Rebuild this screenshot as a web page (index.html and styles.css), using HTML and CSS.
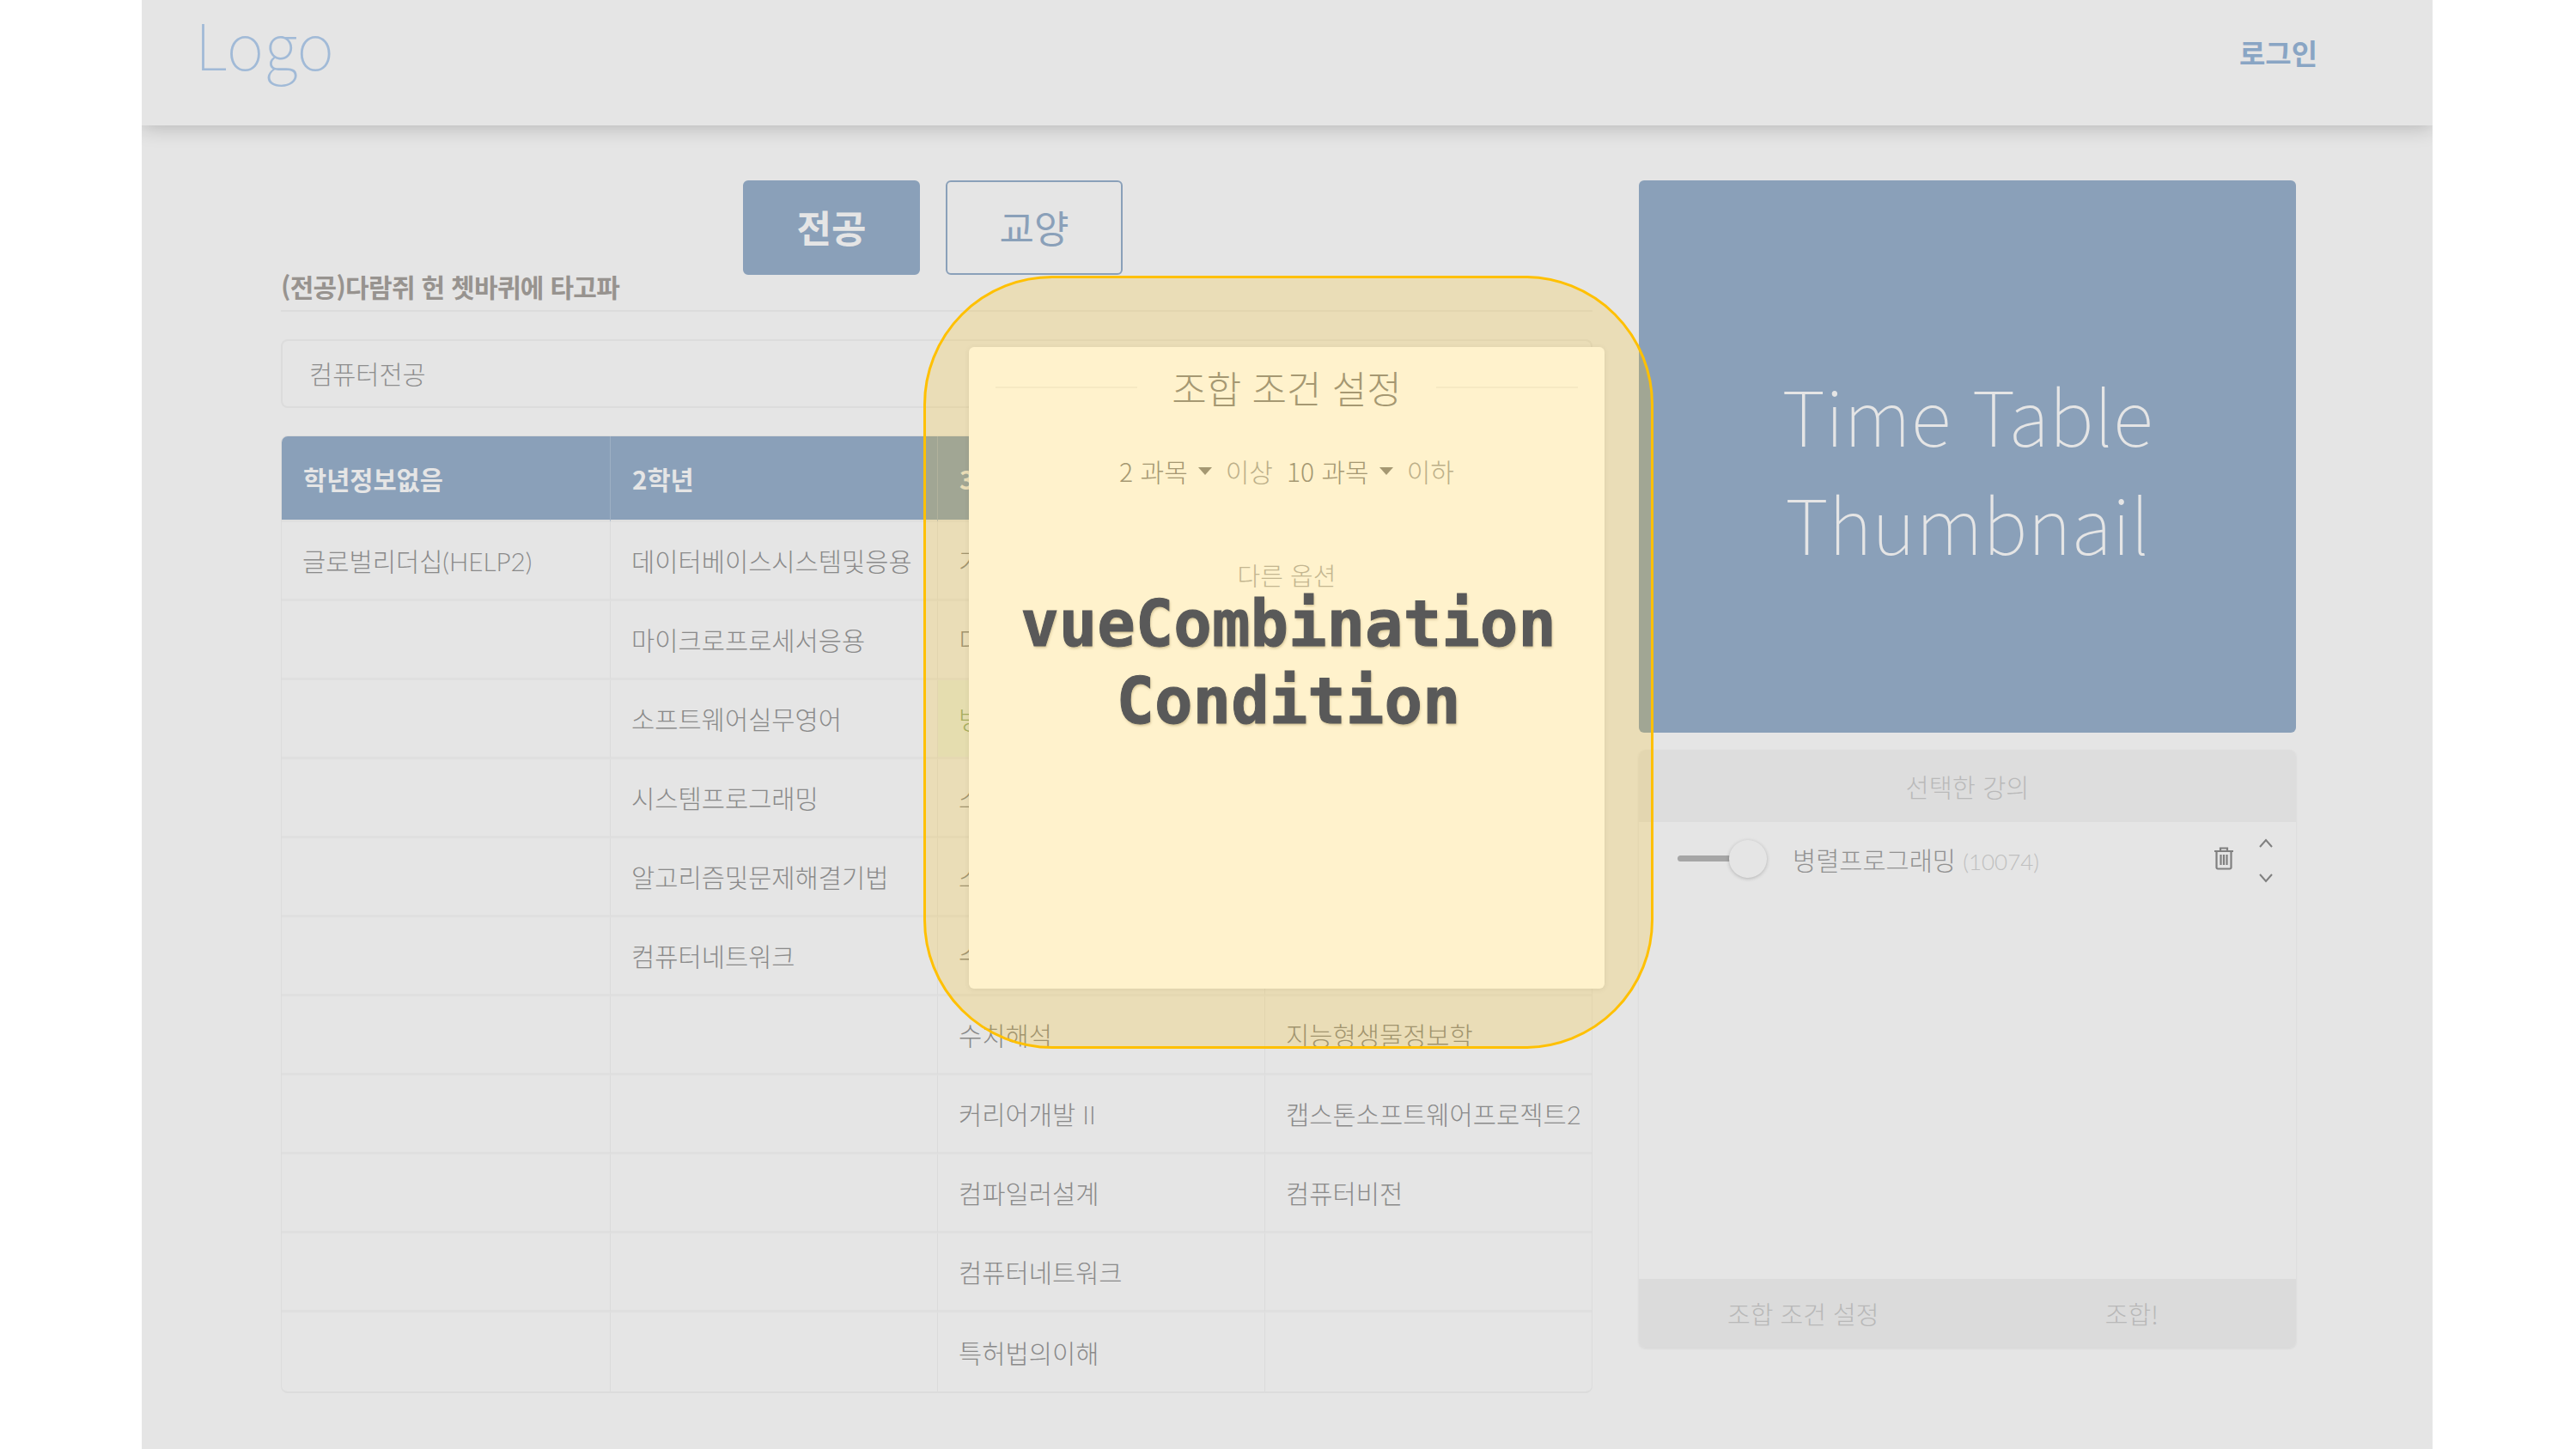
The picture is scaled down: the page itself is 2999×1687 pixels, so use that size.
FILE: index.html
```html
<!DOCTYPE html>
<html lang="ko">

<head>
  <meta charset="UTF-8">
  <title>Time Table</title>
  <link rel="stylesheet" href="styles.css">
</head>

<body>
  <div class="frame">
    <header class="topbar">
      <a class="logo">Logo</a>
      <a class="login">로그인</a>
    </header>

    <main class="content">
      <section class="left">
        <div class="tabs">
          <button class="tab tab-on">전공</button>
          <button class="tab">교양</button>
        </div>
        <h2 class="title">(전공)다람쥐 헌 쳇바퀴에 타고파</h2>
        <div class="search">컴퓨터전공</div>
        <table class="courses">
          <thead>
            <tr><th>학년정보없음</th><th>2학년</th><th>3학년</th><th>4학년</th></tr>
          </thead>
          <tbody>
            <tr><td>글로벌리더십(HELP2)</td><td>데이터베이스시스템및응용</td><td>기계학습</td><td>정보보호개론</td></tr>
            <tr><td></td><td>마이크로프로세서응용</td><td>디지털신호처리</td><td>인공지능</td></tr>
            <tr><td></td><td>소프트웨어실무영어</td><td class="picked">병렬프로그래밍</td><td>자연어처리</td></tr>
            <tr><td></td><td>시스템프로그래밍</td><td>소프트웨어공학</td><td>데이터마이닝</td></tr>
            <tr><td></td><td>알고리즘및문제해결기법</td><td>소프트웨어보안</td><td>컴퓨터그래픽스</td></tr>
            <tr><td></td><td>컴퓨터네트워크</td><td>수리통계학</td><td>임베디드시스템</td></tr>
            <tr><td></td><td></td><td>수치해석</td><td>지능형생물정보학</td></tr>
            <tr><td></td><td></td><td>커리어개발 II</td><td>캡스톤소프트웨어프로젝트2</td></tr>
            <tr><td></td><td></td><td>컴파일러설계</td><td>컴퓨터비전</td></tr>
            <tr><td></td><td></td><td>컴퓨터네트워크</td><td></td></tr>
            <tr><td></td><td></td><td>특허법의이해</td><td></td></tr>
          </tbody>
        </table>
      </section>

      <aside class="right">
        <div class="thumb">Time Table<br>Thumbnail</div>
        <div class="picks">
          <div class="picks-head">선택한 강의</div>
          <div class="picks-body">
            <div class="pick">
              <span class="slider"><span class="slider-track"></span><span class="slider-knob"></span></span>
              <span class="pick-name">병렬프로그래밍 <span class="pick-code">(10074)</span></span>
              <svg class="trash" viewBox="0 0 24 28" fill="none" stroke="#8f8f8f" stroke-width="2.2">
                <path d="M1 6h22M8 6V2.500h8V6M3.500 6v19a1.500 1.500 0 0 0 1.500 1.500h14a1.500 1.500 0 0 0 1.500-1.500V6M8.500 10v12M12 10v12M15.500 10v12"/>
              </svg>
              <span class="arrows">
                <svg viewBox="0 0 18 12" fill="none" stroke="#8f8f8f" stroke-width="2"><path d="M2 10l7-8 7 8"/></svg>
                <svg viewBox="0 0 18 12" fill="none" stroke="#8f8f8f" stroke-width="2"><path d="M2 2l7 8 7-8"/></svg>
              </span>
            </div>
          </div>
          <div class="picks-foot">
            <button class="foot-btn">조합 조건 설정</button>
            <button class="foot-btn">조합!</button>
          </div>
        </div>
      </aside>
    </main>

    <div class="dim"></div>

    <div class="modal">
      <div class="modal-title">조합 조건 설정</div>
      <div class="modal-range">
        <span class="range-val">2 과목<i class="caret"></i></span>
        <span class="range-word">이상</span>
        <span class="range-val">10 과목<i class="caret"></i></span>
        <span class="range-word">이하</span>
      </div>
      <div class="modal-other">다른 옵션</div>
    </div>

    <div class="callout">vueCombination<br>Condition</div>
  </div>
</body>

</html>
```

FILE: styles.css
```css
* {
  box-sizing: border-box;
}

html,
body {
  margin: 0;
  height: 100%;
  overflow: hidden;
  background: #fff;
}

body {
  font-family: "Noto Sans CJK KR", "Noto Sans", sans-serif;
  font-weight: 300;
  font-size: 29.5px;
  color: #9a9a9a;
}

.frame {
  position: relative;
  width: 2667px;
  height: 1687px;
  margin-left: 165px;
  background: #fff;
  overflow: hidden;
}

.topbar {
  height: 146px;
  display: flex;
  justify-content: space-between;
  padding: 0 134px 0 62px;
  box-shadow: 0 3px 22px rgba(0, 0, 0, .2);
}

.logo {
  font-weight: 100;
  font-size: 74px;
  line-height: 100px;
  color: #b4d0f0;
}

.login {
  margin-top: 36px;
  font-size: 33px;
  line-height: 50px;
  font-weight: 700;
  color: #99b8db;
}

.content {
  display: flex;
  gap: 54px;
  padding: 64px 0 0 162px;
}

.left {
  width: 1527px;
}

.tabs {
  display: flex;
  gap: 30px;
  margin-left: 538px;
  height: 110px;
}

.tab {
  width: 206px;
  padding-bottom: 4px;
  border: 2px solid #9ab3cf;
  border-radius: 6px;
  background: #fff;
  font-family: inherit;
  font-size: 44px;
  font-weight: 400;
  color: #9ab3cf;
}

.tab-on {
  background: #9ab3cf;
  color: #fff;
  font-weight: 700;
}

.title {
  height: 55px;
  margin: -12px 0 0;
  font-size: 30px;
  font-weight: 700;
  line-height: 50px;
  letter-spacing: -.7px;
  color: #a9a4a0;
  border-bottom: 2px solid #f5f5f5;
}

.search {
  margin-top: 32px;
  height: 80px;
  padding-left: 31px;
  line-height: 75px;
  border: 2px solid #f5f5f5;
  border-radius: 8px;
  color: #9f9f9f;
}

.courses {
  width: 100%;
  margin-top: 32px;
  table-layout: fixed;
  border-collapse: separate;
  border-spacing: 0;
  border: 1px solid #f5f5f5;
  border-bottom-width: 2px;
  border-radius: 8px;
  overflow: hidden;
}

.courses th,
.courses td {
  height: 92px;
  padding: 0 0 0 24px;
  text-align: left;
  border-left: 1px solid #f4f4f4;
  border-bottom: 3px solid #f9f9f9;
  white-space: nowrap;
}

.courses td {
  font-family: Lato, "Noto Sans CJK KR", sans-serif;
  font-size: 29.6px;
}

.courses th:first-child,
.courses td:first-child {
  width: 382px;
  border-left: 0;
}

.courses th {
  height: 100px;
  padding-left: 25px;
  background: #9ab3cf;
  color: #fff;
  font-weight: 700;
  border-left-color: #b0c4db;
}

.courses tr:last-child td {
  border-bottom: 0;
}

.courses .picked {
  background: #f9fff4;
  color: #a2bd85;
}

.right {
  width: 765px;
}

.thumb {
  height: 643px;
  display: flex;
  align-items: center;
  justify-content: center;
  padding-top: 26px;
  text-align: center;
  border-radius: 6px;
  background: #9ab3cf;
  color: #fff;
  font-weight: 100;
  font-size: 88px;
  line-height: 126px;
}

.picks {
  display: flex;
  flex-direction: column;
  height: 696px;
  margin-top: 20px;
  border-radius: 8px;
  box-shadow: 0 1px 3px rgba(0, 0, 0, .08);
  overflow: hidden;
}

.picks-head {
  height: 84px;
  text-align: center;
  line-height: 84px;
  background: #f7f7f7;
  color: #cfcfcf;
}

.picks-body {
  flex: 1;
  padding: 20px 26px 0 45px;
}

.pick {
  display: flex;
  align-items: center;
  height: 46px;
}

.slider {
  position: relative;
  width: 104px;
  height: 46px;
  flex: none;
}

.slider-track {
  position: absolute;
  left: 0;
  top: 19px;
  width: 70px;
  height: 7px;
  border-radius: 4px;
  background: #b9b9b9;
}

.slider-knob {
  position: absolute;
  left: 60px;
  top: 1px;
  width: 44px;
  height: 44px;
  border-radius: 50%;
  background: #fff;
  box-shadow: 0 1px 4px rgba(0, 0, 0, .22);
}

.pick-name {
  flex: 1;
  margin-left: 30px;
  font-size: 29.5px;
  color: #a3a3a3;
}

.pick-code {
  font-family: Lato, sans-serif;
  font-size: 26px;
  color: #d5d5d5;
}

.trash {
  width: 24px;
  height: 28px;
  margin: -2px 28px 0 0;
}

.arrows {
  display: flex;
  flex-direction: column;
  gap: 28px;
  width: 18px;
  margin-top: 4px;
}

.arrows svg {
  display: block;
  width: 18px;
  height: 12px;
}

.picks-foot {
  display: flex;
  height: 80px;
  background: #f4f4f4;
}

.foot-btn {
  flex: 1;
  border: 0;
  background: none;
  font-family: inherit;
  font-size: 29px;
  font-weight: 300;
  color: #cdcdcd;
}

/* backdrop of the dialog */
.dim {
  position: absolute;
  inset: 0;
  background: rgba(0, 0, 0, .1);
}

.modal {
  position: absolute;
  left: 963px;
  top: 404px;
  width: 740px;
  height: 747px;
  display: flex;
  flex-direction: column;
  align-items: center;
  padding: 0 31px;
  border-radius: 6px;
  background: #fff;
  box-shadow: 0 1px 6px rgba(0, 0, 0, .08);
}

.modal-title {
  width: 100%;
  display: flex;
  align-items: center;
  gap: 40px;
  margin-top: 14px;
  font-size: 44px;
  font-weight: 300;
  line-height: 66px;
  color: #8f8f8f;
}

.modal-title::before,
.modal-title::after {
  content: "";
  flex: 1;
  height: 2px;
  background: #f4f4f4;
}

.modal-range {
  display: flex;
  align-items: center;
  gap: 16px;
  margin-top: 39px;
  line-height: 50px;
  font-size: 30px;
}

.range-val {
  display: flex;
  align-items: center;
  color: #8f8f8f;
}

.range-word {
  color: #acacac;
}

.caret {
  width: 0;
  height: 0;
  margin-left: 12px;
  border: 8px solid transparent;
  border-top: 9px solid #8f8f8f;
  border-bottom: 0;
}

.modal-other {
  margin-top: 76px;
  font-size: 29px;
  color: #b5b5b5;
  line-height: 40px;
}

/* label drawn over the dialog */
.callout {
  position: absolute;
  left: 910px;
  top: 321px;
  width: 850px;
  height: 900px;
  padding-top: 357px;
  border: 3px solid #ffc000;
  border-radius: 150px;
  background: rgba(255, 192, 0, .2);
  font-family: "DejaVu Sans Mono", monospace;
  font-weight: 700;
  font-size: 74px;
  line-height: 90px;
  text-align: center;
  color: #595959;
  -webkit-text-stroke: 1px #595959;
  text-shadow: 1px 2px 3px rgba(120, 100, 40, .35);
}
```
